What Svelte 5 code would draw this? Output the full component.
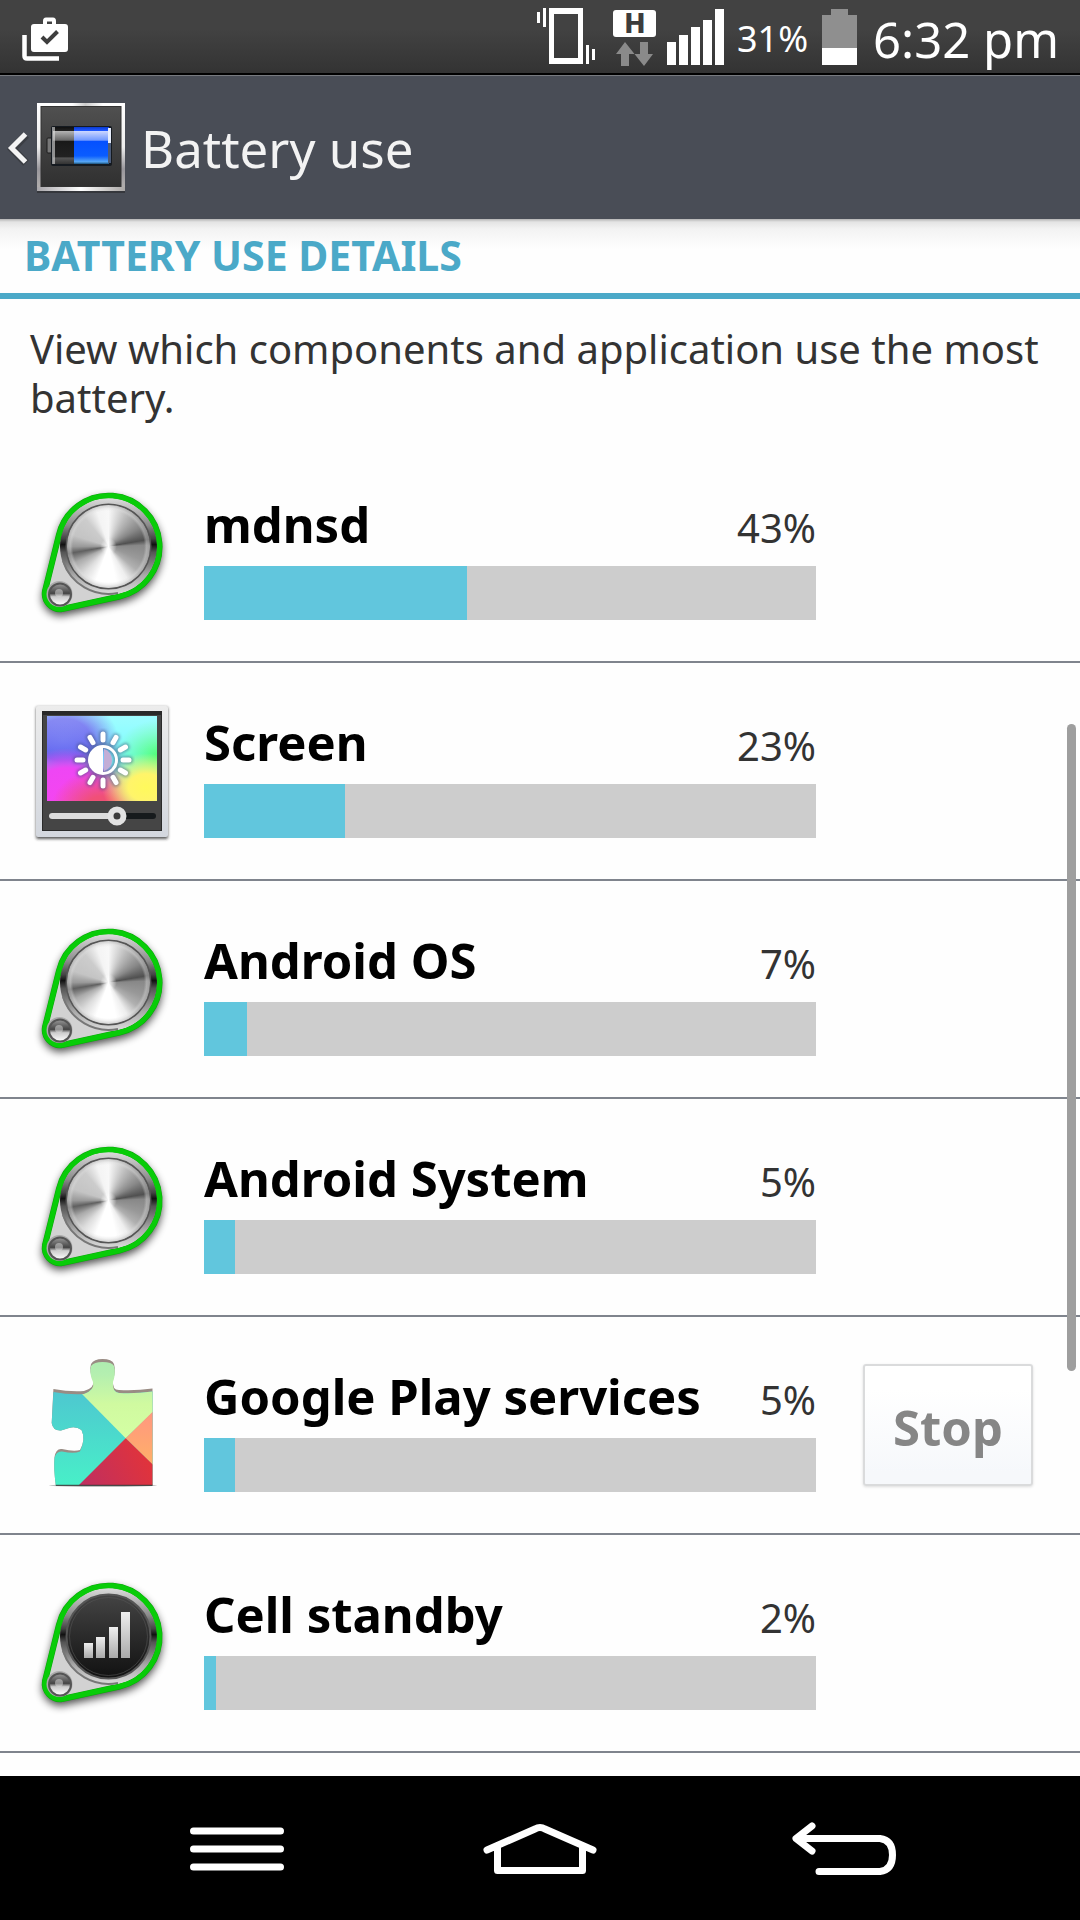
<script>
  const items = [
    { name: 'mdnsd', percent: 43, icon: 'disc' },
    { name: 'Screen', percent: 23, icon: 'screen' },
    { name: 'Android OS', percent: 7, icon: 'disc' },
    { name: 'Android System', percent: 5, icon: 'disc' },
    { name: 'Google Play services', percent: 5, icon: 'puzzle', stoppable: true },
    { name: 'Cell standby', percent: 2, icon: 'cell' }
  ];
  const outline = 'M15 110 L28.900 54 A51 51 0 1 1 89.500 115.500 L32.200 128 A15.500 15.500 0 0 1 15 110z';
  const puzzle =
    'M23.4 36 Q40 39 54 38 Q65 35 63 27 Q59 18 61 11 Q64 6 72.500 6 Q82 6 84 11 Q86 18 83 27 Q82 37 89 37 Q105 38 122.500 35.500 V132.300 H25.800 Q23.500 115 24.500 104 Q26 95 32 96 Q44 99 50 97 Q56 86 51.500 77 Q46 73 39 75 L31 77.500 Q23 78 21.700 70z';
  const face =
    'M23.4 39 Q40 42 54 41 Q65 37 63 29 Q59 20 61 13 Q64 9 72.500 9 Q82 9 84 13 Q86 20 83 29 Q82 39 89 40 Q105 41 122.500 38.500 V132.300 H25.800 Q23.500 115 24.500 105 Q26 98 32 98.500 Q44 101 50 98.500 Q56 86 51.500 77 Q46 73 39 75 L31 77.500 Q23 78 21.700 70z';
  const rays = Array.from({ length: 12 }, (_, i) => i * 30);
</script>

{#snippet gauge(cell)}
  <svg class="icon" viewBox="0 0 144 144" aria-hidden="true">
    <defs>
      <linearGradient id="ring" x1="0" y1="0" x2="0" y2="1">
        <stop offset="0" stop-color="#dcdcdc" /><stop offset=".28" stop-color="#8b8b8b" />
        <stop offset=".42" stop-color="#444" /><stop offset=".48" stop-color="#111" /><stop offset=".56" stop-color="#555" />
        <stop offset=".8" stop-color="#aaa" /><stop offset="1" stop-color="#ddd" />
      </linearGradient>
      <linearGradient id="dark" x1="0" y1="0" x2="0" y2="1">
        <stop offset="0" stop-color="#444" /><stop offset="1" stop-color="#111" />
      </linearGradient>
      <linearGradient id="silver" x1="0" y1="0" x2="0" y2="1">
        <stop offset="0" stop-color="#eee" /><stop offset="1" stop-color="#aaa" />
      </linearGradient>
      <linearGradient id="knob" x1="0" y1="0" x2="0" y2="1">
        <stop offset="0" stop-color="#999" /><stop offset=".45" stop-color="#444" />
        <stop offset=".6" stop-color="#ccc" /><stop offset="1" stop-color="#fff" />
      </linearGradient>
      <filter id="soft" x="-20%" y="-20%" width="140%" height="140%"><feGaussianBlur stdDeviation="4" /></filter>
    </defs>
    <path d={outline} fill="#000" stroke="#000" stroke-width="5" opacity=".7" filter="url(#soft)" transform="translate(0 4)" />
    <path d={outline} fill="#d2d2d2" stroke="#0aa80a" stroke-width="6" />
    <circle cx="78.500" cy="65.500" r="48.500" fill="url(#ring)" />
    <path d="M33 80 A48 48 0 0 0 88 112" fill="none" stroke="#777" stroke-width="2" />
    <path d={outline} fill="none" stroke="#08cc08" stroke-width="5" />
    <circle cx="78.500" cy="65.500" r="42" fill={cell ? 'url(#dark)' : '#aaa'} stroke="#555" stroke-width="2" />
    {#if cell}
      <circle cx="78.500" cy="65.500" r="39" fill="none" stroke="#555" stroke-width="1" opacity=".6" />
      <g fill="url(#silver)">
        <rect x="54" y="72" width="9" height="15" /><rect x="66" y="66" width="9" height="21" />
        <rect x="79" y="56" width="9" height="31" /><rect x="91" y="41" width="9" height="46" />
      </g>
    {:else}
      <foreignObject x="37" y="24" width="83" height="83"><div class="metal"></div></foreignObject>
    {/if}
    <circle cx="29.500" cy="113" r="13" fill="#aaa" />
    <circle cx="30" cy="113.500" r="11" fill="url(#knob)" stroke="#555" stroke-width="2" />
    <circle cx="29" cy="112" r="4" fill="#ddd" opacity=".5" />
  </svg>
{/snippet}

{#snippet screenIcon()}
  <svg class="icon" viewBox="0 0 144 144" aria-hidden="true">
    <defs>
      <radialGradient id="cBlue" cx="15%" cy="28%" r="50%"><stop offset="0" stop-color="#6a70f2" /><stop offset=".5" stop-color="#6468f0" /><stop offset="1" stop-color="#6468f0" stop-opacity="0" /></radialGradient>
      <radialGradient id="cPink" cx="18%" cy="96%" r="58%"><stop offset="0" stop-color="#f545f0" /><stop offset=".6" stop-color="#ee46f4" /><stop offset="1" stop-color="#e048f0" stop-opacity="0" /></radialGradient>
      <radialGradient id="cYellow" cx="90%" cy="84%" r="40%"><stop offset="0" stop-color="#fff95c" /><stop offset=".4" stop-color="#fff46a" /><stop offset="1" stop-color="#fff46a" stop-opacity="0" /></radialGradient>
      <radialGradient id="cGreen" cx="104%" cy="46%" r="42%"><stop offset="0" stop-color="#4cff6c" /><stop offset="1" stop-color="#5cff78" stop-opacity="0" /></radialGradient>
      <radialGradient id="cRed" cx="50%" cy="108%" r="46%"><stop offset="0" stop-color="#f05070" /><stop offset=".3" stop-color="#f05078" /><stop offset="1" stop-color="#f05070" stop-opacity="0" /></radialGradient>
      <linearGradient id="cSheen" x1="0" y1="0" x2="0" y2="1"><stop offset="0" stop-color="#fff" stop-opacity=".25" /><stop offset="1" stop-color="#fff" stop-opacity="0" /></linearGradient>
      <linearGradient id="frame" x1="0" y1="0" x2="0" y2="1"><stop offset="0" stop-color="#ececec" /><stop offset="1" stop-color="#d3d7de" /></linearGradient>
      <filter id="edge" x="-10%" y="-10%" width="120%" height="120%"><feGaussianBlur stdDeviation="1.500" /></filter>
    </defs>
    <rect x="6" y="8" width="132" height="132" rx="2" fill="#222" opacity=".75" filter="url(#edge)" />
    <rect x="6" y="7" width="132" height="131" rx="2" fill="url(#frame)" />
    <rect x="12.500" y="12.500" width="119" height="119" fill="#454545" stroke="#2a2a2a" />
    <rect x="12" y="12" width="120" height="4" fill="#292929" />
    <g>
      <rect x="17" y="17" width="110" height="85" fill="#7ffcff" />
      <rect x="17" y="17" width="110" height="85" fill="url(#cBlue)" />
      <rect x="17" y="17" width="110" height="85" fill="url(#cGreen)" />
      <rect x="17" y="17" width="110" height="85" fill="url(#cPink)" />
      <rect x="17" y="17" width="110" height="85" fill="url(#cRed)" />
      <rect x="17" y="17" width="110" height="85" fill="url(#cYellow)" />
      <rect x="17" y="17" width="110" height="38" fill="url(#cSheen)" />
    </g>
    {#each ['#405078', '#fff'] as tone, layer}
      <g stroke={tone} opacity={layer ? 1 : 0.5} filter={layer ? null : 'url(#edge)'}>
        {#each rays as a}
          <line x1="73" y1="41" x2="73" y2="35" stroke-width={layer ? 5 : 8} stroke-linecap="round" transform="rotate({a} 73 61)" />
        {/each}
        <circle cx="73" cy="61" r="13.500" stroke-width={layer ? 3 : 7} fill="none" />
      </g>
    {/each}
    <path d="M73 47 A14 14 0 0 0 73 75z" fill="#fff" />
    <path d="M74 50 A11.500 11.500 0 0 1 74 72z" fill="#c3aed6" />
    <rect x="19" y="114" width="107" height="6" rx="3" fill="#161a1c" />
    <rect x="19" y="114" width="68" height="6" rx="3" fill="#dcdcdc" />
    <circle cx="87" cy="117" r="6.500" fill="#3c3c3c" stroke="#e2e2e2" stroke-width="6" />
  </svg>
{/snippet}

{#snippet puzzleIcon()}
  <svg class="icon" viewBox="0 0 144 144" aria-hidden="true">
    <defs>
      <clipPath id="face"><path d={face} /></clipPath>
      <linearGradient id="teal" x1="0" y1="0" x2="0" y2="1"><stop offset="0" stop-color="#4ec6d0" /><stop offset="1" stop-color="#48f0c8" /></linearGradient>
      <linearGradient id="lime" x1="0" y1="0" x2="0" y2="1"><stop offset="0" stop-color="#aaebb0" /><stop offset=".25" stop-color="#b4efb0" /><stop offset=".6" stop-color="#d0faa0" /><stop offset="1" stop-color="#d4ffa4" /></linearGradient>
      <linearGradient id="red" x1="0" y1="1" x2="1" y2=".7"><stop offset="0" stop-color="#bd2f62" /><stop offset="1" stop-color="#e0333c" /></linearGradient>
      <linearGradient id="orange" x1="0" y1="0" x2="0" y2="1"><stop offset="0" stop-color="#ff9780" /><stop offset="1" stop-color="#ffb068" /></linearGradient>
    </defs>
    <ellipse cx="73" cy="132.500" rx="54" ry="1.500" fill="#000" opacity=".25" />
    <path d={puzzle} fill="#998c84" />
    <g clip-path="url(#face)">
      <rect x="18" y="36" width="106" height="97" fill="url(#teal)" />
      <path d="M52 41 L40 0 H124 V58 L95.700 85.300z" fill="url(#lime)" />
      <path d="M123 58.500 V112 L95.700 85.300z" fill="url(#orange)" />
      <path d="M95.700 85.300 L123 111.800 V133 H48z" fill="url(#red)" />
    </g>
    <path d="M25.800 132.300 H122.500" stroke="#333" stroke-width="1" />
  </svg>
{/snippet}

<div class="page">
  <div class="status">
    <svg class="glyph" width="48" height="48" viewBox="21 15 48 48" aria-hidden="true">
      <path d="M24.500 35 V56 Q24.500 58.500 27 58.500 H59" fill="none" stroke="#fff" stroke-width="4.500" />
      <path fill-rule="evenodd" fill="#fff" d="M34 24 H43 V21 Q43 17.500 46 17.500 H53 Q56 17.500 56 21 V24 H65 Q68 24 68 27 V49 Q68 52 65 52 H34 Q31 52 31 49 V27 Q31 24 34 24z M47 24 H52 V21.500 H47z" />
      <path d="M42 37 L47 42 L57.500 31.500" fill="none" stroke="#3e3e3e" stroke-width="4" />
    </svg>
    <div class="right">
      <svg width="190" height="60" viewBox="536 7 190 60" aria-hidden="true">
        <g fill="#fff">
          <path fill-rule="evenodd" d="M549 8 H583 V64 H549z M554 14 V58 H578 V14z" />
          <path d="M537 12h3v11h-3z M543 8h3v19h-3z M586 45h3v19h-3z M592 49h3v11h-3z" />
          <rect x="613" y="10" width="43" height="27" rx="3" />
          <path d="M667 42h9v23h-9z M679 35h9v30h-9z M691 27h9v38h-9z M703 20h9v45h-9z M715 9h9v56h-9z" />
        </g>
        <text class="net" x="635" y="33" text-anchor="middle">H</text>
        <path fill="#8a8a8a" d="M625 42 L634.500 54 H629 V66 H621 V54 H616z M640 42 H648 V54 H653 L644 66 L634.500 54 H640z" />
      </svg>
      <span class="charge">31%</span>
      <svg width="35" height="56" viewBox="0 0 35 56" aria-hidden="true">
        <path fill="#8f8f8f" d="M9 0H26V6H35V56H0V6H9z" /><path fill="#fff" d="M0 39H35V56H0z" />
      </svg>
      <span class="time">6:32 pm</span>
    </div>
  </div>

  <header>
    <button class="up" aria-label="Navigate up">
      <svg width="24" height="40" viewBox="0 0 24 40" aria-hidden="true">
        <path d="M21 7 L7.500 21 L21 35" fill="none" stroke="#222" stroke-width="8" opacity=".35" />
        <path d="M20.500 6 L6.500 20 L20.500 34" fill="none" stroke="#f4f4f4" stroke-width="5" />
      </svg>
      <svg width="92" height="92" viewBox="0 0 92 92" aria-hidden="true">
        <defs>
          <linearGradient id="edgeTop" x1="0" y1="0" x2="1" y2="0"><stop offset="0" stop-color="#fff" /><stop offset=".4" stop-color="#fff" /><stop offset=".55" stop-color="#ccc" /><stop offset=".75" stop-color="#fff" /><stop offset="1" stop-color="#fff" /></linearGradient>
          <linearGradient id="edgeSide" x1="0" y1="0" x2="0" y2="1"><stop offset="0" stop-color="#fff" /><stop offset=".5" stop-color="#eee" /><stop offset=".75" stop-color="#99979c" /><stop offset="1" stop-color="#b5b2b0" /></linearGradient>
          <linearGradient id="edgeBottom" x1="0" y1="0" x2="1" y2="0"><stop offset="0" stop-color="#a8a6aa" /><stop offset=".5" stop-color="#fff" /><stop offset="1" stop-color="#aaa7a5" /></linearGradient>
          <linearGradient id="panel" x1="0" y1="0" x2="0" y2="1"><stop offset="0" stop-color="#505050" /><stop offset="1" stop-color="#303030" /></linearGradient>
          <linearGradient id="blackCell" x1="0" y1="0" x2="0" y2="1"><stop offset="0" stop-color="#111" /><stop offset=".1" stop-color="#222" /><stop offset=".12" stop-color="#b0b0b0" /><stop offset=".36" stop-color="#666" /><stop offset=".38" stop-color="#191919" /><stop offset=".8" stop-color="#222" /><stop offset=".84" stop-color="#555" /><stop offset="1" stop-color="#333" /></linearGradient>
          <linearGradient id="blueCell" x1="0" y1="0" x2="0" y2="1"><stop offset="0" stop-color="#0a3ad0" /><stop offset=".1" stop-color="#2058ff" /><stop offset=".12" stop-color="#c8d4ff" /><stop offset=".36" stop-color="#7098ff" /><stop offset=".38" stop-color="#0550ff" /><stop offset=".78" stop-color="#0a5cff" /><stop offset=".94" stop-color="#58a8f4" /><stop offset="1" stop-color="#1a5078" /></linearGradient>
        </defs>
        <rect x="2" y="3" width="88" height="88" fill="#222" opacity=".5" />
        <rect x="2" y="1" width="88" height="88" fill="url(#edgeSide)" />
        <rect x="2" y="1" width="88" height="4" fill="url(#edgeTop)" />
        <rect x="2" y="85" width="88" height="4" fill="url(#edgeBottom)" />
        <rect x="6" y="4.500" width="80" height="80" fill="url(#panel)" stroke="#333" />
        <rect x="12" y="36" width="5" height="15" rx="1" fill="#777" stroke="#1c1c1c" />
        <rect x="16" y="24" width="61" height="40" rx="2" fill="#151a20" />
        <rect x="18" y="25" width="22" height="37" fill="url(#blackCell)" />
        <rect x="39" y="25" width="35" height="37" fill="url(#blueCell)" />
        <rect x="17" y="25" width="3" height="37" fill="#ddd" opacity=".6" />
        <rect x="73" y="26" width="3" height="15" fill="#e8eefc" />
        <rect x="73" y="41" width="3" height="20" fill="#4d5c78" />
      </svg>
    </button>
    <h1>Battery use</h1>
  </header>

  <main>
    <h2>BATTERY USE DETAILS</h2>
    <p>View which components and application use the most battery.</p>
    <ul>
      {#each items as item}
        <li>
          {#if item.icon === 'screen'}
            {@render screenIcon()}
          {:else if item.icon === 'puzzle'}
            {@render puzzleIcon()}
          {:else}
            {@render gauge(item.icon === 'cell')}
          {/if}
          <div class="info">
            <div class="label">
              <span class="name">{item.name}</span>
              <span class="percent">{item.percent}%</span>
            </div>
            <div class="track"><div class="fill" style="width: {item.percent}%"></div></div>
          </div>
          {#if item.stoppable}<button class="stop">Stop</button>{/if}
        </li>
      {/each}
    </ul>
    <div class="scrollbar"></div>
  </main>

  <nav>
    <button aria-label="Menu">
      <svg width="94" height="44" viewBox="0 0 94 44"><path d="M3.500 4H90.500M3.500 22H90.500M3.500 40H90.500" stroke="#fff" stroke-width="7" stroke-linecap="round" /></svg>
    </button>
    <button aria-label="Home">
      <svg width="116" height="52" viewBox="482 1823 116 52"><path d="M487 1850 L535 1829 Q540 1826 545 1829 L593 1850 M497.500 1846 V1870.500 H582.500 V1846" fill="none" stroke="#fff" stroke-width="7" stroke-linecap="round" stroke-linejoin="round" /></svg>
    </button>
    <button aria-label="Back">
      <svg width="106" height="56" viewBox="790 1821 106 56"><path d="M812 1826 L796 1838.500 L812 1851 M797 1838.500 H880 Q892.500 1840 892.500 1855 Q892.500 1870 880 1871.500 H819" fill="none" stroke="#fff" stroke-width="7" stroke-linecap="round" stroke-linejoin="round" /></svg>
    </button>
  </nav>
</div>

<style>
  :global(body) { margin: 0; background: #fefefe; }
  .page {
    min-height: 100vh;
    display: flex;
    flex-direction: column;
    font-family: 'Noto Sans', 'Open Sans', sans-serif;
    background: #fefefe;
  }
  svg { display: block; flex: none; }
  button { border: 0; padding: 0; background: none; font: inherit; cursor: pointer; }
  h1, h2, p, ul { margin: 0; padding: 0; }

  .status {
    height: 73px;
    display: flex;
    align-items: center;
    justify-content: space-between;
    padding: 0 21px;
    background: linear-gradient(#424242 40%, #333);
    border-bottom: 2px solid #000;
    color: #fff;
  }
  .glyph { margin-top: 4px; }
  .right { display: flex; align-items: center; }
  .charge { font-size: 36px; line-height: 48px; margin: 4px 14px 0 11px; }
  .time { font-size: 49px; line-height: 64px; margin: 4px 0 0 16px; }
  .net { font-family: 'DejaVu Sans', sans-serif; font-weight: bold; font-size: 26px; fill: #3c3c3c; }

  header {
    height: 143px;
    display: flex;
    align-items: center;
    gap: 14px;
    padding-left: 5px;
    border-top: 1px solid #777a7f;
    background: #494d56;
    color: #f3f3f3;
  }
  .up { display: flex; align-items: center; gap: 6px; }
  h1 { font-size: 51px; line-height: 68px; font-weight: 400; }

  main {
    flex: 1;
    position: relative;
    background: linear-gradient(#b4b4b4, #e4e4e4 3px, #f3f3f3 10px, #fefefe 30px);
  }
  h2 {
    padding: 8px 24px 10px;
    border-bottom: 6px solid #4ba9c8;
    color: #4ba9c8;
    font-size: 41px;
    line-height: 56px;
    font-weight: 700;
  }
  p { padding: 25px 24px 23px 30px; color: #333; font-size: 40px; line-height: 49px; }
  ul { list-style: none; }
  li {
    height: 216px;
    display: grid;
    grid-template-columns: 144px 1fr 170px;
    align-items: center;
    padding: 0 47px 0 30px;
    border-bottom: 2px solid #7f848d;
  }
  .icon { width: 144px; height: 144px; }
  .metal {
    width: 83px;
    height: 83px;
    border-radius: 50%;
    background:
      radial-gradient(closest-side, #fff 0, #fff0 20%, #fff0 86%, #ddd6 92%, #aaa8 100%),
      conic-gradient(#f8f8f8, #bbb 30deg, #888 58deg, #505050 80deg, #888 88deg, #999 112deg, #b0b0b0 130deg, #eee 150deg, #fff 168deg, #fff 200deg, #ddd 222deg, #aaa 244deg, #606060 260deg, #999 270deg, #c4c4c4 288deg, #ccc 320deg, #f4f4f4 342deg, #f8f8f8);
  }
  .info { margin: 0 47px 0 30px; }
  .label { height: 80px; display: flex; align-items: baseline; justify-content: space-between; white-space: nowrap; }
  .name { color: #000; font-size: 49px; line-height: 76px; font-weight: 700; }
  .percent { color: #333; font-size: 40px; line-height: 56px; }
  .track { height: 54px; background: #cdcdcd; }
  .fill { height: 100%; background: #61c6dd; }
  .stop {
    height: 122px;
    padding-top: 3px;
    border: 2px solid #dadbdc;
    border-radius: 3px;
    background: linear-gradient(#fff 20%, #f6f8fb 90%);
    box-shadow: 0 1px 3px #0002;
    color: #868686;
    font-size: 49px;
    line-height: 64px;
    font-weight: 700;
  }
  .scrollbar {
    position: absolute;
    top: 505px;
    right: 4px;
    width: 9px;
    height: 647px;
    border-radius: 5px;
    background: #9e9e9e;
  }
  nav {
    height: 142px;
    display: grid;
    grid-template-columns: repeat(3, 1fr);
    padding: 2px 86px 0;
    background: #000;
  }
  nav button { display: flex; align-items: center; justify-content: center; }
</style>
